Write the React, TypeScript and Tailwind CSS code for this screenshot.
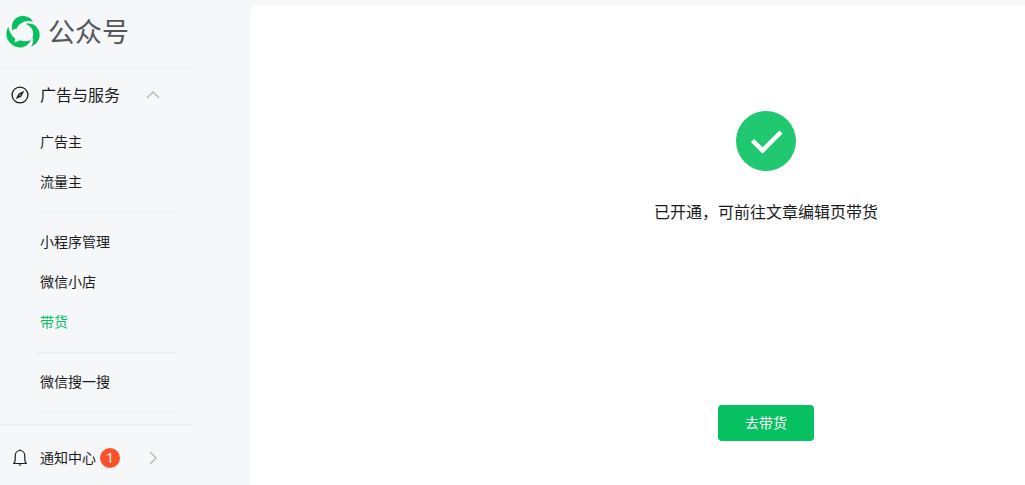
import clsx from "clsx";

interface MenuItem {
  label: string;
  active?: boolean;
}

const MENU_GROUPS: MenuItem[][] = [
  [{ label: "广告主" }, { label: "流量主" }],
  [{ label: "小程序管理" }, { label: "微信小店" }, { label: "带货", active: true }],
  [{ label: "微信搜一搜" }],
];

function LogoMark() {
  return (
    <svg viewBox="17 17 102 98" className="h-8 w-[34px]" fill="#07c160" aria-hidden="true">
      <path d="M35 62C29 37 44 17 67 17C82 17 92 24 99 34C76 28 55 38 48 57C42 56 38 58 35 62Z" />
      <path d="M76 41C98 35 119 51 119 75C119 93 107 105 93 110C100 99 101 91 97 83C104 67 96 50 76 41Z" />
      <path d="M23 50C14 66 15 86 28 99C46 120 79 118 92 91C79 96 68 95 59 91L42 98L44 86C33 78 26 66 23 50Z" />
    </svg>
  );
}

function CompassIcon() {
  return (
    <svg viewBox="0 0 20 20" className="size-5" fill="none" aria-hidden="true">
      <circle cx="10" cy="10" r="7.9" stroke="#1a1b1c" strokeWidth="1.3" />
      <path d="M14.300 5.700L11.400 11.400L5.700 14.300L8.600 8.600Z" fill="#1a1b1c" />
      <circle cx="10" cy="10" r="0.7" fill="#f6f7f9" />
    </svg>
  );
}

function BellIcon() {
  return (
    <svg viewBox="0 0 20 20" className="size-5" fill="none" stroke="#1a1b1c" strokeWidth="1.2" aria-hidden="true">
      <path d="M3.700 15.500C4.800 14.200 5.200 13 5.200 11.500V8C5.200 4.800 7.200 2.500 10 2.500C12.800 2.500 14.800 4.800 14.800 8V11.500C14.800 13 15.200 14.200 16.300 15.500Z" strokeLinejoin="round" />
      <path d="M10 1.500V2.500M8.800 17H11.200" />
    </svg>
  );
}

function Chevron({ className }: { className?: string }) {
  return (
    <svg viewBox="0 0 14 14" className={clsx("size-3.5", className)} fill="none" stroke="#b5b6b8" strokeWidth="1.3" aria-hidden="true">
      <path d="M4 1L10 7L4 13" />
    </svg>
  );
}

function Sidebar() {
  return (
    <aside className="w-48 shrink-0">
      <header className="flex h-[68px] items-center border-b border-[#ebecee] pb-1 pl-1.5">
        <a href="#home" className="flex items-center gap-2">
          <LogoMark />
          <span className="pb-0.5 text-[27px] leading-8 text-[#55565a]">公众号</span>
        </a>
      </header>

      <nav>
        <button type="button" aria-expanded="true" className="flex h-[54px] w-full items-center pl-2.5 text-base">
          <CompassIcon />
          <span className="ml-2.5 w-[106px] pb-0.5 text-left">广告与服务</span>
          <Chevron className="-rotate-90" />
        </button>

        {MENU_GROUPS.map((group) => (
          <div key={group[0].label}>
            <ul>
              {group.map((item) => (
                <li key={item.label}>
                  <a
                    href={`#${item.label}`}
                    className={clsx("flex h-10 items-center pb-0.5 pl-10 text-sm", item.active && "text-[#07c160]")}
                  >
                    {item.label}
                  </a>
                </li>
              ))}
            </ul>
            <hr className="mt-2.5 mr-4 mb-[9px] ml-9 border-[#ebecee]" />
          </div>
        ))}
      </nav>

      <div className="mt-[11px] border-t border-[#ebecee]">
        <button type="button" className="flex h-[66px] w-full items-center pl-2.5 text-sm">
          <BellIcon />
          <span className="ml-2.5 flex w-[106px] items-center gap-1">
            <span className="pb-0.5">通知中心</span>
            <span className="flex size-5 items-center justify-center rounded-full bg-[#fa5128] font-['Open_Sans'] text-white">
              1
            </span>
          </span>
          <Chevron />
        </button>
      </div>
    </aside>
  );
}

export default function App() {
  return (
    <div className="flex h-screen overflow-hidden bg-[#f6f7f9] font-['Noto_Sans_CJK_SC',sans-serif] text-[#1a1b1c]">
      <Sidebar />

      {/* The content panel keeps its desktop width and runs off narrow windows */}
      <main className="mt-[5px] ml-[58px] flex min-h-screen min-w-[1032px] flex-1 flex-col items-center rounded-tl-lg bg-white pt-[106px]">
        <svg viewBox="0 0 60 60" className="size-[60px]" aria-hidden="true">
          <circle cx="30" cy="30" r="30" fill="#20c870" />
          <path d="M16.500 29.500L26.500 39.500L45 21" fill="none" stroke="#fff" strokeWidth="4.500" />
        </svg>
        <p className="mt-7 text-base">已开通，可前往文章编辑页带货</p>
        <button type="button" className="mt-[182px] h-9 w-24 rounded bg-[#07c160] pb-0.5 text-sm text-white">
          去带货
        </button>
      </main>
    </div>
  );
}
